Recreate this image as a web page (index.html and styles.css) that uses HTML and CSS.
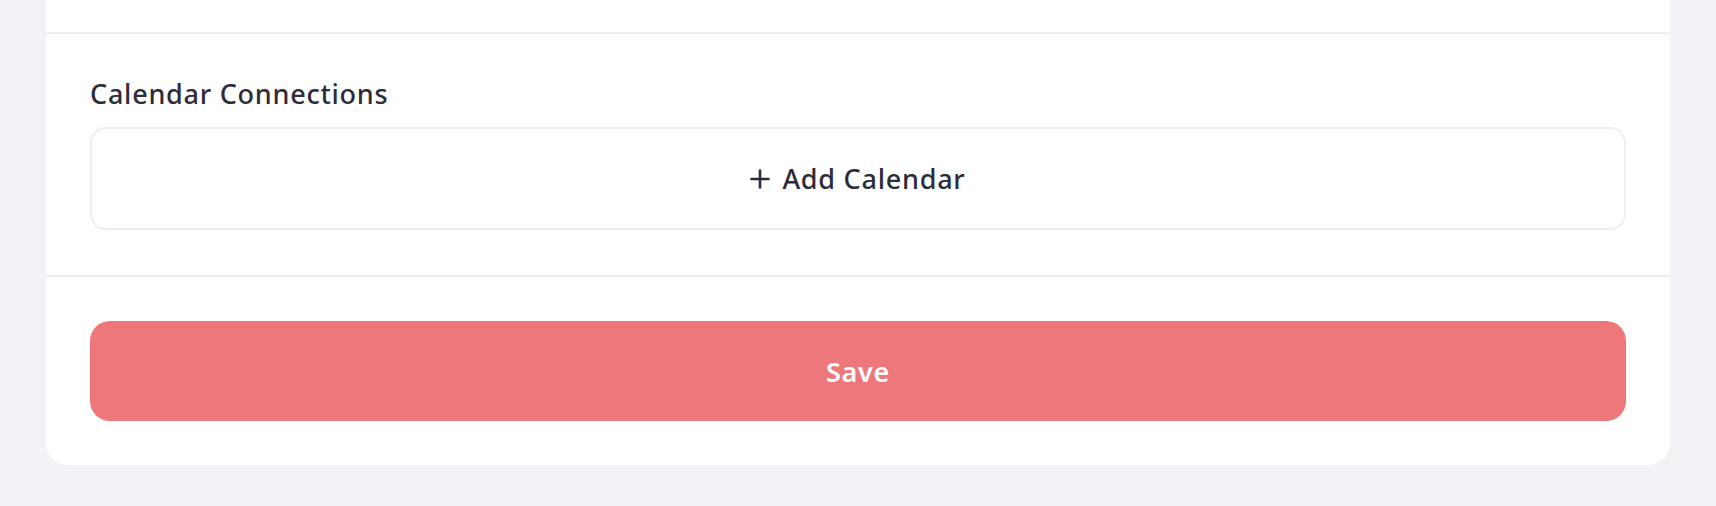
FILE: index.html
```html
<!DOCTYPE html>
<html lang="en">
<head>
<meta charset="utf-8">
<title>Calendar Connections</title>
<link rel="stylesheet" href="styles.css">
</head>
<body>
<main class="page">
  <div class="card">
    <div class="card-top"></div>
    <section class="section">
      <h2 class="section-title">Calendar Connections</h2>
      <button class="add-box" type="button">
        <svg class="plus" viewBox="0 0 20 20" width="20" height="20" aria-hidden="true">
          <path d="M10 1.5V18.5M1.5 10H18.5" stroke="#2c2c3b" stroke-width="2.6" stroke-linecap="round" fill="none"/>
        </svg>
        <span>Add Calendar</span>
      </button>
    </section>
    <footer class="footer">
      <button class="save" type="button">Save</button>
    </footer>
  </div>
</main>
</body>
</html>
```

FILE: styles.css
```css
* { box-sizing: border-box; }
html, body {
  margin: 0;
  padding: 0;
  background: #f2f3f7;
  font-family: "Noto Sans", Lato, sans-serif;
  color: #2c2c3b;
}
.page {
  padding: 0 46px 40px;
}
.card {
  background: #ffffff;
  border-radius: 0 0 22px 22px;
}
.card-top {
  height: 34px;
  border-bottom: 2px solid #ededf2;
}
.section {
  padding: 44px 44px 45px;
  border-bottom: 2px solid #ededf2;
}
.section-title {
  margin: 0 0 17px;
  font-size: 27px;
  line-height: 32px;
  font-weight: 500;
  letter-spacing: 0.75px;
}
.add-box {
  display: flex;
  align-items: center;
  justify-content: center;
  gap: 12px;
  width: 100%;
  height: 103px;
  background: #fff;
  border: 2px solid #eeeef2;
  border-radius: 16px;
  font-family: inherit;
  font-size: 27px;
  font-weight: 500;
  letter-spacing: 0.75px;
  color: #2c2c3b;
  cursor: pointer;
}
.plus { flex: none; }
.footer {
  padding: 44px;
}
.save {
  display: block;
  width: 100%;
  height: 100px;
  border: 0;
  border-radius: 20px;
  background: #ee777b;
  color: #ffffff;
  font-family: inherit;
  font-size: 27px;
  font-weight: 600;
  letter-spacing: 0.75px;
  cursor: pointer;
}
```
